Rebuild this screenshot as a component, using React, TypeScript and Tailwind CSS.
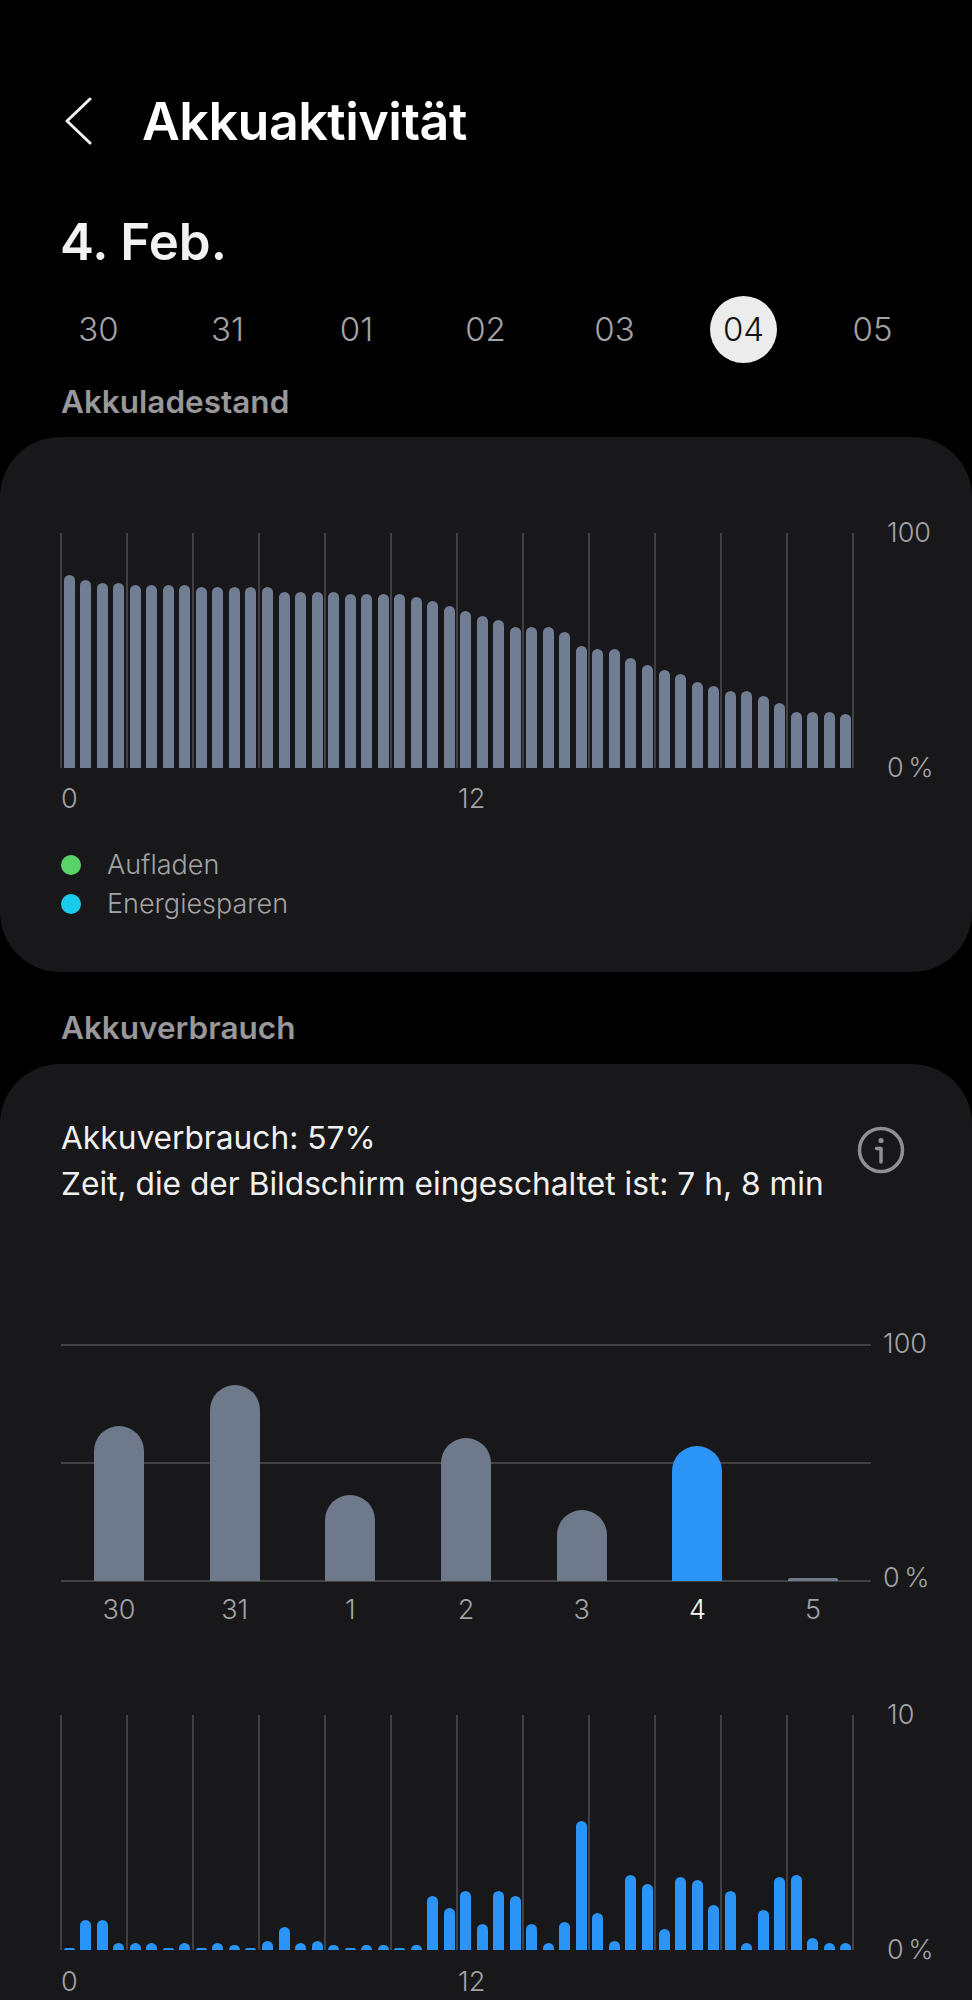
import React from "react";

const batteryTops = [225,240,247,247,254,254,254,254,261,261,261,261,261,275,275,275,275,282,282,282,282,289,303,317,331,346,360,381,381,381,395,438,445,445,473,494,508,522,544,558,572,572,586,607,635,635,635,642];
const usageTops = [745,661,661,731,731,731,745,731,745,731,738,745,724,682,731,724,738,745,738,738,745,738,590,625,575,675,575,590,675,731,668,364,640,724,526,555,689,533,541,618,575,731,633,533,526,717,731,731];
const days = ["30","31","01","02","03","04","05"];
const weekly = [
  { label: "30", h: 155 },
  { label: "31", h: 196 },
  { label: "1", h: 86 },
  { label: "2", h: 143 },
  { label: "3", h: 71 },
  { label: "4", h: 135, active: true },
  { label: "5", h: 3 },
];
const gridLines = Array.from({ length: 13 }, (_, i) => i);

function HourChart({ tops, base, blue, top, bottom }: { tops: number[]; base: number; blue?: boolean; top: string; bottom: string }) {
  return (
    <div className="flex">
      <div className="relative w-[794px] h-[235px]">
        <div className="absolute inset-0 flex justify-between">
          {gridLines.map((i) => (
            <div key={i} className="w-[2px] h-full bg-[#414143]" />
          ))}
        </div>
        <div className="relative ml-[1px] h-full grid grid-cols-[repeat(48,1fr)] items-end">
          {tops.map((t, i) => (
            <div
              key={i}
              className={`w-[11px] mx-auto rounded-t-[5.5px] ${blue ? "bg-[#2a95f7]" : "bg-[#707d93]"}`}
              style={{ height: (base - t) / 3 }}
            />
          ))}
        </div>
      </div>
      <div className="ml-[33px] h-[235px] flex flex-col justify-between text-[27px] leading-[0px] font-light text-[#a3a3a5] [word-spacing:-3px]">
        <span className="block">{top}</span>
        <span className="block">{bottom}</span>
      </div>
    </div>
  );
}

function HourAxis() {
  return (
    <div className="flex text-[27px] leading-[32px] font-light text-[#a3a3a5] pl-[1px]">
      <span className="w-[397px]">0</span>
      <span>12</span>
    </div>
  );
}

export default function App() {
  return (
    <div className="w-[972px] h-[2000px] overflow-hidden bg-black font-['Inter',sans-serif]">
      <header className="flex items-center h-[48px] mt-[97px] pl-[64px]">
        <svg width="28" height="48" viewBox="0 0 28 48" fill="none" className="shrink-0">
          <path d="M26 2 L3 24 L26 46" stroke="#f2f2f2" strokeWidth="3" strokeLinecap="round" strokeLinejoin="round" />
        </svg>
        <h1 className="ml-[50px] mt-[2px] text-[52px] leading-[48px] font-semibold text-white tracking-[-0.5px]">Akkuaktivität</h1>
      </header>

      <h2 className="mt-[67px] pl-[60px] text-[51px] leading-[60px] font-semibold text-[#f2f2f2]">4. Feb.</h2>

      <div className="mt-[24px] ml-[34px] w-[903px] grid grid-cols-7 h-[67px] items-center justify-items-center">
        {days.map((d) =>
          d === "04" ? (
            <span key={d} className="w-[67px] h-[67px] rounded-full bg-[#ececec] flex items-center justify-center text-[33px] font-light text-[#111]">{d}</span>
          ) : (
            <span key={d} className="text-[33px] font-light text-[#a3a3a5]">{d}</span>
          )
        )}
      </div>

      <h3 className="mt-[20px] pl-[61px] text-[31.5px] leading-[38px] font-semibold text-[#98989a]">Akkuladestand</h3>

      <section className="mt-[16px] h-[535px] rounded-[60px] bg-[#18181a] pl-[60px] pt-[96px]">
        <HourChart tops={batteryTops} base={803} top="100" bottom="0 %" />
        <div className="mt-[15px]"><HourAxis /></div>
        <ul className="mt-[30px] text-[27px] leading-[39px] font-light text-[#a3a3a5]">
          <li className="flex items-center"><span className="w-[20px] h-[20px] rounded-full bg-[#58d46a] ml-[1px] mr-[26px]" />Aufladen</li>
          <li className="flex items-center"><span className="w-[20px] h-[20px] rounded-full bg-[#1accec] ml-[1px] mr-[26px]" />Energiesparen</li>
        </ul>
      </section>

      <h3 className="mt-[37px] pl-[61px] text-[31.5px] leading-[38px] font-semibold text-[#98989a]">Akkuverbrauch</h3>

      <section className="mt-[17px] h-[1000px] rounded-[60px] bg-[#18181a] pl-[60px] pt-[51px]">
        <div className="flex items-start">
          <p className="w-[797px] text-[31.7px] leading-[46px] text-[#f0f0f0] pl-[1px] whitespace-nowrap">
            Akkuverbrauch: 57%<br />Zeit, die der Bildschirm eingeschaltet ist: 7 h, 8 min
          </p>
          <svg width="48" height="48" viewBox="0 0 48 48" fill="none" className="mt-[11px]">
            <circle cx="24" cy="24" r="21.5" stroke="#909092" strokeWidth="3.5" />
            <circle cx="24" cy="14.5" r="2.6" fill="#909092" />
            <path d="M19.5 22.5 H24 V36" stroke="#909092" strokeWidth="3.5" strokeLinecap="round" strokeLinejoin="round" />
          </svg>
        </div>

        <div className="mt-[137px] ml-[1px] flex">
          <div className="relative w-[810px] h-[238px]">
            <div className="absolute inset-0 flex flex-col justify-between">
              <div className="h-[2px] bg-[#414143]" />
              <div className="h-[2px] bg-[#414143]" />
              <div className="h-[2px] bg-[#414143]" />
            </div>
            <div className="relative h-[237px] pl-[33px] flex items-end gap-[65.7px]">
              {weekly.map((w) => (
                <div
                  key={w.label}
                  className={`w-[50px] shrink-0 ${w.h < 10 ? "rounded-t-[2px] bg-[#707a88]" : "rounded-t-[25px]"} ${w.active ? "bg-[#2a95f7]" : w.h < 10 ? "" : "bg-[#6e7a8c]"}`}
                  style={{ height: w.h }}
                />
              ))}
            </div>
          </div>
          <div className="ml-[12px] h-[234px] flex flex-col justify-between text-[27px] leading-[0px] font-light text-[#a3a3a5] [word-spacing:-3px]">
            <span className="block">100</span>
            <span className="block">0 %</span>
          </div>
        </div>
        <div className="mt-[12px] pl-[34px] flex gap-[65.7px] text-[27px] leading-[32px] font-light">
          {weekly.map((w) => (
            <span key={w.label} className={`w-[50px] shrink-0 text-center ${w.active ? "text-white" : "text-[#a3a3a5]"}`}>{w.label}</span>
          ))}
        </div>

        <div className="mt-[89px]">
          <HourChart tops={usageTops} base={752} blue top="10" bottom="0 %" />
        </div>
        <div className="mt-[16px]"><HourAxis /></div>
      </section>
    </div>
  );
}
